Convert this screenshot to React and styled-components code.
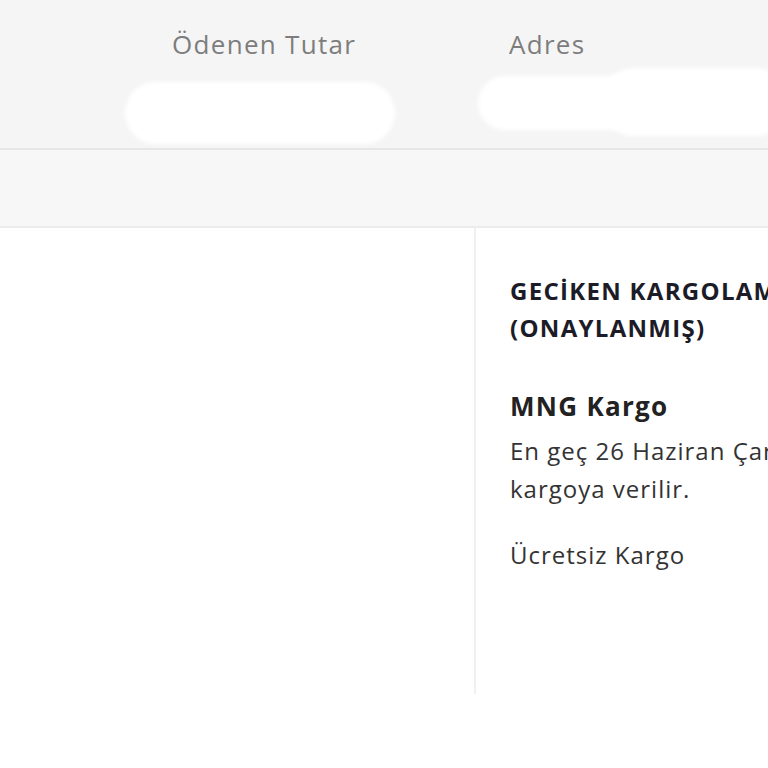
import React from "react";
import styled, { createGlobalStyle } from "styled-components";

const Global = createGlobalStyle`
  html, body { margin: 0; padding: 0; background: #fff; overflow: hidden; }
  body { font-family: "Open Sans", "Noto Sans", sans-serif; }
`;

const Page = styled.div`
  width: 768px;
  height: 768px;
  overflow: hidden;
  background: #fff;
`;

const Header = styled.div`
  height: 148px;
  background: #f5f5f5;
  border-bottom: 2px solid #e6e6e6;
  display: flex;
  position: relative;
`;

const HeaderCol = styled.div`
  width: ${(p) => p.$w}px;
  padding-left: ${(p) => p.$pl}px;
  padding-top: 26px;
  box-sizing: border-box;
  flex-shrink: 0;
`;

const Label = styled.div`
  font-size: 26px;
  line-height: 36px;
  color: #7d7d7d;
  letter-spacing: 1.3px;
`;

const Blob = styled.div`
  position: absolute;
  background: #fff;
  border-radius: 40px;
  filter: blur(2px);
`;

const SubBar = styled.div`
  height: 76px;
  background: #f7f7f7;
  border-bottom: 2px solid #ececec;
`;

const Body = styled.div`
  display: flex;
  height: 466px;
`;

const LeftPane = styled.div`
  width: 474px;
  flex-shrink: 0;
  border-right: 2px solid #f0f0f0;
`;

const RightPane = styled.div`
  padding: 44px 0 0 34px;
  width: 420px;
  flex-shrink: 0;
`;

const Title = styled.div`
  font-size: 24px;
  font-weight: 700;
  line-height: 37px;
  letter-spacing: 1.3px;
  color: #1c1c28;
  white-space: nowrap;
`;

const Carrier = styled.div`
  margin-top: 42px;
  font-size: 26px;
  font-weight: 700;
  line-height: 36px;
  letter-spacing: 1.3px;
  color: #222;
`;

const Text = styled.div`
  font-size: 24px;
  line-height: 38px;
  letter-spacing: 1px;
  color: #333;
  margin-top: ${(p) => p.$mt || 0}px;
  width: 380px;
`;

export default function App() {
  return (
    <Page>
      <Global />
      <Header>
        <HeaderCol $w={474} $pl={172}>
          <Label>Ödenen Tutar</Label>
        </HeaderCol>
        <HeaderCol $w={294} $pl={35}>
          <Label>Adres</Label>
        </HeaderCol>
        <Blob style={{ left: 125, top: 82, width: 270, height: 62 }} />
        <Blob style={{ left: 478, top: 76, width: 180, height: 54 }} />
        <Blob style={{ left: 600, top: 68, width: 190, height: 68 }} />
      </Header>
      <SubBar />
      <Body>
        <LeftPane />
        <RightPane>
          <Title>GECİKEN KARGOLAMA</Title>
          <Title>(ONAYLANMIŞ)</Title>
          <Carrier>MNG Kargo</Carrier>
          <Text $mt={8}>En geç 26 Haziran Çarşamba kargoya verilir.</Text>
          <Text $mt={28}>Ücretsiz Kargo</Text>
        </RightPane>
      </Body>
    </Page>
  );
}
